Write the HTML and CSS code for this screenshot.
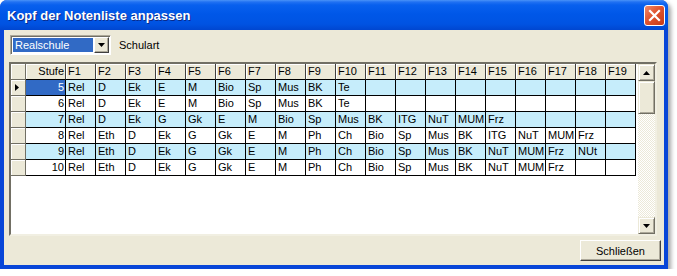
FILE: index.html
```html
<!DOCTYPE html>
<html lang="de">
<head>
  <meta charset="UTF-8">
  <title>Kopf der Notenliste anpassen</title>
  <link rel="stylesheet" href="styles.css">
</head>
<body>

<div class="window">
  <!-- Titelleiste -->
  <div class="titlebar">
    <span class="title">Kopf der Notenliste anpassen</span>
    <span class="close">
      <svg width="13" height="13" viewBox="0 0 13 13"><path d="M2 2 L11 11 M11 2 L2 11" stroke="#fff" stroke-width="2.2" stroke-linecap="square"/></svg>
    </span>
  </div>

  <div class="client">
    <!-- Schulart -->
    <div class="toolbar">
      <div class="combo">
        <span class="combo-value">Realschule</span>
        <span class="combo-btn">
          <svg width="7" height="4" viewBox="0 0 7 4"><path d="M0 0 H7 L3.5 4 Z" fill="#000"/></svg>
        </span>
      </div>
      <span class="label">Schulart</span>
    </div>

    <!-- Tabelle -->
    <div class="grid">
      <table class="grid-table">
        <colgroup>
          <col class="c-ind"><col class="c-stufe">
          <col class="c-f"><col class="c-f"><col class="c-f"><col class="c-f"><col class="c-f">
          <col class="c-f"><col class="c-f"><col class="c-f"><col class="c-f"><col class="c-f">
          <col class="c-f"><col class="c-f"><col class="c-f"><col class="c-f"><col class="c-f">
          <col class="c-f"><col class="c-f"><col class="c-f"><col class="c-f">
        </colgroup>
        <thead>
          <tr>
            <th class="ind"></th><th class="num">Stufe</th>
            <th>F1</th><th>F2</th><th>F3</th><th>F4</th><th>F5</th><th>F6</th><th>F7</th><th>F8</th><th>F9</th><th>F10</th>
            <th>F11</th><th>F12</th><th>F13</th><th>F14</th><th>F15</th><th>F16</th><th>F17</th><th>F18</th><th>F19</th>
          </tr>
        </thead>
        <tbody>
          <tr class="alt">
            <td class="ind"><svg width="4" height="7" viewBox="0 0 4 7"><path d="M0 0 L4 3.5 L0 7 Z" fill="#000"/></svg></td>
            <td class="num sel">5</td>
            <td>Rel</td><td>D</td><td>Ek</td><td>E</td><td>M</td><td>Bio</td><td>Sp</td><td>Mus</td><td>BK</td><td>Te</td>
            <td></td><td></td><td></td><td></td><td></td><td></td><td></td><td></td><td></td>
          </tr>
          <tr>
            <td class="ind"></td><td class="num">6</td>
            <td>Rel</td><td>D</td><td>Ek</td><td>E</td><td>M</td><td>Bio</td><td>Sp</td><td>Mus</td><td>BK</td><td>Te</td>
            <td></td><td></td><td></td><td></td><td></td><td></td><td></td><td></td><td></td>
          </tr>
          <tr class="alt">
            <td class="ind"></td><td class="num">7</td>
            <td>Rel</td><td>D</td><td>Ek</td><td>G</td><td>Gk</td><td>E</td><td>M</td><td>Bio</td><td>Sp</td><td>Mus</td>
            <td>BK</td><td>ITG</td><td>NuT</td><td>MUM</td><td>Frz</td><td></td><td></td><td></td><td></td>
          </tr>
          <tr>
            <td class="ind"></td><td class="num">8</td>
            <td>Rel</td><td>Eth</td><td>D</td><td>Ek</td><td>G</td><td>Gk</td><td>E</td><td>M</td><td>Ph</td><td>Ch</td>
            <td>Bio</td><td>Sp</td><td>Mus</td><td>BK</td><td>ITG</td><td>NuT</td><td>MUM</td><td>Frz</td><td></td>
          </tr>
          <tr class="alt">
            <td class="ind"></td><td class="num">9</td>
            <td>Rel</td><td>Eth</td><td>D</td><td>Ek</td><td>G</td><td>Gk</td><td>E</td><td>M</td><td>Ph</td><td>Ch</td>
            <td>Bio</td><td>Sp</td><td>Mus</td><td>BK</td><td>NuT</td><td>MUM</td><td>Frz</td><td>NUt</td><td></td>
          </tr>
          <tr>
            <td class="ind"></td><td class="num">10</td>
            <td>Rel</td><td>Eth</td><td>D</td><td>Ek</td><td>G</td><td>Gk</td><td>E</td><td>M</td><td>Ph</td><td>Ch</td>
            <td>Bio</td><td>Sp</td><td>Mus</td><td>BK</td><td>NuT</td><td>MUM</td><td>Frz</td><td></td><td></td>
          </tr>
        </tbody>
      </table>

      <!-- Scrollbar -->
      <div class="vscroll">
        <span class="sb-btn">
          <svg width="7" height="4" viewBox="0 0 7 4"><path d="M0 4 H7 L3.5 0 Z" fill="#000"/></svg>
        </span>
        <span class="sb-thumb"></span>
        <span class="sb-track"></span>
        <span class="sb-btn">
          <svg width="7" height="4" viewBox="0 0 7 4"><path d="M0 0 H7 L3.5 4 Z" fill="#000"/></svg>
        </span>
      </div>
    </div>

    <div class="footer">
      <button class="btn">Schließen</button>
    </div>
  </div>
</div>

</body>
</html>
```

FILE: styles.css
```css
* {
  box-sizing: border-box;
}
body {
  margin: 0;
  background-color: #fff;
  font-family: "Liberation Sans", Arial, sans-serif;
  font-size: 11px;
  color: #000;
}
.window {
  width: 668px;
  height: 269px;
  display: flex;
  flex-direction: column;
  background-color: #0846D8;
  border-radius: 7px 7px 0 0;
  box-shadow: 3px 3px 4px rgba(0,0,0,0.35);
}

/* TITELLEISTE */
.titlebar {
  height: 30px;
  display: flex;
  align-items: center;
  justify-content: space-between;
  padding: 1px 3px 0 7px;
  border-radius: 7px 7px 0 0;
  background: linear-gradient(to bottom, #4A93F8 0, #2171F2 2px, #0860EE 5px, #0057E8 14px, #0053E2 24px, #0046D0 30px);
}
.title {
  color: #fff;
  font-weight: bold;
  font-size: 13px;
  text-shadow: 1px 1px #0A2A8A;
}
.close {
  width: 21px;
  height: 21px;
  display: flex;
  align-items: center;
  justify-content: center;
  border: 1px solid #fff;
  border-radius: 3px;
  background: linear-gradient(135deg, #F08A6C 0, #E0542F 45%, #C63A17 100%);
}

/* INHALT */
.client {
  flex: 1;
  margin: 0 4px 4px;
  padding: 5px 3px 4px 5px;
  background-color: #ECE9D8;
  display: flex;
  flex-direction: column;
}
.toolbar {
  display: flex;
  align-items: center;
  gap: 8px;
  margin-left: 1px;
  height: 20px;
}
.combo {
  width: 101px;
  height: 20px;
  display: flex;
  padding: 1px;
  background-color: #fff;
  border: 1px solid;
  border-color: #ACA899 #fff #fff #ACA899;
  box-shadow: inset 1px 1px #716F64;
}
.combo-value {
  flex: 1;
  margin: 1px 1px 1px 1px;
  padding-left: 2px;
  line-height: 15px;
  background-color: #316AC5;
  color: #fff;
}
.combo-btn {
  width: 15px;
  display: flex;
  align-items: center;
  justify-content: center;
  background-color: #ECE9D8;
  border: 1px solid;
  border-color: #fff #404040 #404040 #fff;
  box-shadow: inset -1px -1px #ACA899;
}

/* TABELLE */
.grid {
  margin-top: 7px;
  width: 648px;
  height: 174px;
  display: flex;
  justify-content: space-between;
  background-color: #fff;
  border: 2px solid;
  border-color: #716F64 #F1EFE2 #F1EFE2 #716F64;
}
.grid-table {
  width: 625px;
  table-layout: fixed;
  border-collapse: separate;
  border-spacing: 0;
  align-self: flex-start;
}
.c-ind { width: 15px; }
.c-stufe { width: 40px; }
.c-f { width: 30px; }
.grid-table th,
.grid-table td {
  height: 16px;
  padding: 0 0 0 2px;
  line-height: 15px;
  text-align: left;
  font-weight: normal;
  white-space: nowrap;
  overflow: hidden;
  border-right: 1px solid #000;
  border-bottom: 1px solid #000;
}
.grid-table th {
  background-color: #ECE9D8;
  border-right-color: #404040;
  box-shadow: inset 1px 1px #fff;
}
.grid-table tr.alt td {
  background-color: #C6EDFB;
}
.grid-table .num {
  text-align: right;
  padding: 0 1px 0 0;
}
.grid-table .sel,
.grid-table tr.alt td.sel {
  background-color: #316AC5;
  color: #fff;
}
.grid-table .ind,
.grid-table tr.alt td.ind {
  background-color: #ECE9D8;
  border-right-color: #716F64;
  border-bottom-color: #716F64;
  box-shadow: inset 1px 1px #fff;
  padding: 0 0 0 4px;
}
.grid-table .ind svg {
  display: block;
}

/* SCROLLBAR */
.vscroll {
  width: 17px;
  display: flex;
  flex-direction: column;
}
.sb-btn,
.sb-thumb {
  height: 17px;
  display: flex;
  align-items: center;
  justify-content: center;
  background-color: #ECE9D8;
  border: 1px solid;
  border-color: #ECE9D8 #716F64 #716F64 #ECE9D8;
  box-shadow: inset 1px 1px #fff, inset -1px -1px #ACA899;
}
.sb-thumb {
  height: 33px;
}
.sb-track {
  flex: 1;
  background: repeating-conic-gradient(#fff 0 25%, #ECE9D8 0 50%) 0 0 / 2px 2px;
}

/* FUSS */
.footer {
  display: flex;
  justify-content: flex-end;
  margin-top: 4px;
}
.btn {
  width: 81px;
  height: 21px;
  padding: 0;
  font-family: "Liberation Sans", Arial, sans-serif;
  font-size: 11px;
  color: #000;
  background-color: #ECE9D8;
  border: 1px solid;
  border-color: #fff #404040 #404040 #fff;
  box-shadow: inset -1px -1px #ACA899;
}
```
